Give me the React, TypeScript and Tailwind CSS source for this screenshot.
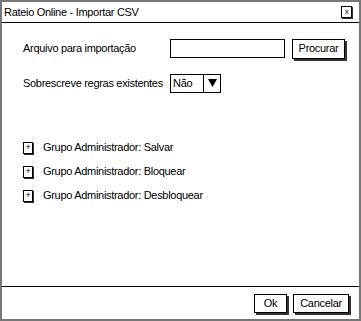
import React from "react";

const font = { fontFamily: '"Liberation Sans", Arial, sans-serif' };

function ShadowButton({ children, className = "" }: { children: React.ReactNode; className?: string }) {
  return (
    <div
      className={`flex items-center justify-center whitespace-nowrap border border-black bg-white text-[11px] tracking-[-0.3px] text-black shadow-[2px_2px_0_#333] ${className}`}
    >
      {children}
    </div>
  );
}

const grupos = ["Salvar", "Bloquear", "Desbloquear"];

export default function App() {
  return (
    <div className="w-[361px] h-[321px] bg-white text-[11px] tracking-[-0.3px]" style={font}>
      <div className="flex h-full w-full flex-col border-2 border-[#777] text-black">
        {/* title bar */}
        <div className="flex h-[21px] items-center justify-between border-b border-black pl-[2px] pr-[7px]">
          <span className="whitespace-nowrap">Rateio Online - Importar CSV</span>
          <div className="flex h-[12px] w-[11px] items-center justify-center border border-black text-[8px] leading-none shadow-[1px_1px_0_#333]">
            x
          </div>
        </div>

        {/* body */}
        <div className="flex-1 pl-[21px] pt-[15px]">
          <div className="flex items-center h-[21px]">
            <span className="w-[147px] whitespace-nowrap">Arquivo para importação</span>
            <div className="h-[19px] w-[115px] border border-black" />
            <ShadowButton className="ml-[7px] h-[20px] w-[53px]">Procurar</ShadowButton>
          </div>

          <div className="mt-[14px] flex items-center h-[20px]">
            <span className="w-[147px] whitespace-nowrap">Sobrescreve regras existentes</span>
            <div className="flex h-[19px] w-[51px] border border-black">
              <span className="flex-1 pl-[2px] leading-[17px]">Não</span>
              <div className="flex w-[17px] items-center justify-center border-l border-black">
                <svg width="9" height="8" viewBox="0 0 9 8">
                  <path d="M0 0 H9 L4.5 8 Z" fill="black" />
                </svg>
              </div>
            </div>
          </div>

          <div className="mt-[48px] flex flex-col gap-[11px]">
            {grupos.map((g) => (
              <div key={g} className="flex items-center h-[13px]">
                <div className="flex h-[12px] w-[10px] items-center justify-center border border-black text-[9px] leading-none shadow-[1px_1px_0_#333]">
                  +
                </div>
                <span className="ml-[10px] whitespace-nowrap">Grupo Administrador: {g}</span>
              </div>
            ))}
          </div>
        </div>

        {/* footer */}
        <div className="flex h-[33px] items-center justify-end gap-[6px] border-t border-black pr-[10px]">
          <ShadowButton className="h-[19px] w-[33px]">Ok</ShadowButton>
          <ShadowButton className="h-[19px] w-[56px]">Cancelar</ShadowButton>
        </div>
      </div>
    </div>
  );
}
